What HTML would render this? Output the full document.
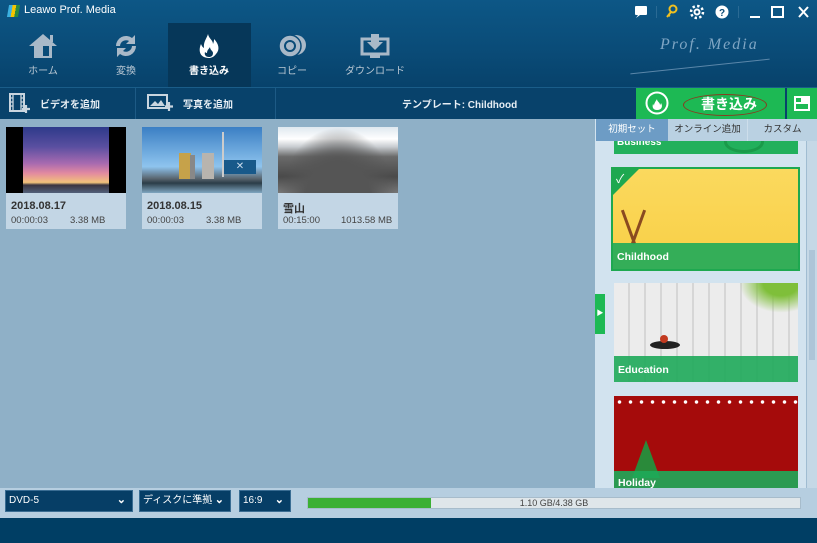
<!DOCTYPE html>
<html><head><meta charset="utf-8"><style>
*{margin:0;padding:0;box-sizing:border-box}
body{width:817px;height:543px;overflow:hidden;position:relative;font-family:"Liberation Sans","Noto Sans CJK JP",sans-serif;background:#8fb0c7}
.a{position:absolute}
.hdr{left:0;top:0;width:817px;height:87px;background:linear-gradient(#0d5786,#0a4b77 60%,#07426b)}
.nav{color:#b9c7d3;font-size:10px;text-align:center;width:82px;top:23px;height:64px}
.nav svg{display:block;margin:10px auto 3px}
.tb{left:0;top:87px;width:817px;height:32px;background:#08426b;border-top:1px solid #1a5d89}
.tbt{color:#e7eef4;font-size:10px;font-weight:bold;top:96px}
.card{width:120px;height:102px;top:127px;background:#c3d6e5}
.card .t{position:absolute;left:0;top:0;width:120px;height:66px;overflow:hidden}
.card b{position:absolute;left:5px;top:73px;font-size:11px;color:#333}
.card span{position:absolute;top:88px;font-size:9.5px;color:#444}
.tab{top:119px;height:22px;font-size:9.5px;color:#333;text-align:center;line-height:22px}
.tpl{width:184px;position:absolute;overflow:hidden}
.lab{position:absolute;left:0;bottom:0;width:100%;height:26px;background:rgba(30,170,90,.9);color:#fff;font-weight:bold;font-size:10.5px;padding:8px 0 0 4px}
.sel{top:490px;height:22px;background:#063e66;border:1px solid #3a6d93;color:#fff;font-size:10px;line-height:20px;padding-left:3px}
.sel i{position:absolute;right:6px;top:-1px;font-style:normal;font-size:11px;font-weight:bold}
</style></head><body>
<div class="a hdr"></div>
<div class="a" style="left:8px;top:5px;width:11px;height:12px;background:linear-gradient(90deg,#3bb0e0 33%,#f5c400 33% 66%,#2a8a3f 66%);transform:skewX(-10deg)"></div>
<div class="a" style="left:24px;top:4px;color:#fff;font-size:11px">Leawo Prof. Media</div>
<svg class="a" style="left:630px;top:4px" width="187" height="16" viewBox="0 0 187 16">
<rect x="5" y="2" width="12" height="9" rx="1" fill="#fff"/><path d="M8 11l-2 3 4-3z" fill="#fff"/>
<rect x="26" y="2" width="1" height="12" fill="#2a6a94"/>
<circle cx="43" cy="5" r="3.5" fill="none" stroke="#f0c020" stroke-width="2"/><path d="M41 8l-4 5M38 11l2 1" stroke="#f0c020" stroke-width="2"/>
<circle cx="67" cy="8" r="3.5" fill="#fff"/><circle cx="67" cy="8" r="6" fill="none" stroke="#fff" stroke-width="2.5" stroke-dasharray="2.4 2.3"/><circle cx="67" cy="8" r="1.5" fill="#0b4c78"/>
<circle cx="92" cy="8" r="6.5" fill="#fff"/><text x="92" y="12" font-size="10" font-weight="bold" text-anchor="middle" fill="#0b4c78" font-family="Liberation Sans">?</text>
<rect x="108" y="2" width="1" height="12" fill="#2a6a94"/>
<rect x="120" y="12" width="10" height="2" fill="#fff"/>
<rect x="142" y="3" width="11" height="10" fill="none" stroke="#fff" stroke-width="2"/>
<path d="M169 3l9 10M178 3l-9 10" stroke="#fff" stroke-width="2"/>
</svg>
<div class="a" style="left:168px;top:23px;width:83px;height:64px;background:#063759"></div>
<div class="a nav" style="left:2px"><svg width="30" height="26" viewBox="0 0 30 26"><path d="M15 1L1 13h5v12h18V13h5z" fill="#a9b9c8"/><rect x="22" y="2" width="3" height="7" fill="#a9b9c8"/><rect x="15" y="13" width="6" height="10" fill="#0a4b77"/></svg>ホーム</div>
<div class="a nav" style="left:85px"><svg width="28" height="26" viewBox="0 0 28 26"><path d="M4 13A10 10 0 0 1 20 5l3-3v9h-9l3-3A6 6 0 0 0 8 13z M24 13A10 10 0 0 1 8 21l-3 3v-9h9l-3 3a6 6 0 0 0 9-5z" fill="#a9b9c8"/></svg>変換</div>
<div class="a nav" style="left:168px;color:#fff;font-weight:bold"><svg width="28" height="26" viewBox="0 0 28 26"><path d="M14 25C5 25 3 18 6 11c1 3 3 4 3 4C8 9 12 5 13 1c1 5 5 6 5 10 1-2 1-4 1-5 5 5 6 11 2 15-2 3-5 4-7 4z" fill="#fff"/><path d="M14 24c-3 0-5-2-4-5 1 1 2 1 2 1 0-3 2-4 3-6 0 3 3 4 3 6 0 3-2 4-4 4z" fill="#063759"/></svg>書き込み</div>
<div class="a nav" style="left:251px"><svg width="30" height="26" viewBox="0 0 30 26"><circle cx="19" cy="12" r="10" fill="#a9b9c8"/><circle cx="13" cy="13" r="11" fill="#a9b9c8" stroke="#0a4b77" stroke-width="1.5"/><circle cx="13" cy="13" r="5" fill="none" stroke="#0a4b77" stroke-width="2"/></svg>コピー</div>
<div class="a nav" style="left:334px"><svg width="30" height="26" viewBox="0 0 30 26"><rect x="2" y="6" width="26" height="15" fill="none" stroke="#a9b9c8" stroke-width="3"/><path d="M11 1h8v8h4l-8 8-8-8h4z" fill="#a9b9c8"/><rect x="10" y="22" width="10" height="3" fill="#a9b9c8"/></svg>ダウンロード</div>
<div class="a" style="left:660px;top:36px;color:#7fa6c4;font-size:16px;font-style:italic;font-family:'Liberation Serif',serif;letter-spacing:2px">Prof. Media</div>
<div class="a" style="left:630px;top:66px;width:140px;height:1px;background:#5b87aa;transform:rotate(-6deg)"></div>
<div class="a tb"></div>
<div class="a" style="left:135px;top:88px;width:1px;height:31px;background:#1d5a85"></div>
<div class="a" style="left:275px;top:88px;width:1px;height:31px;background:#1d5a85"></div>
<svg class="a" style="left:9px;top:93px" width="22" height="20" viewBox="0 0 22 20"><rect x="1" y="1" width="14" height="17" fill="none" stroke="#c9d5df" stroke-width="2"/><path d="M4 1v17M12 1v17M1 5h3M1 9h3M1 13h3M12 5h3M12 9h3M12 13h3" stroke="#c9d5df" stroke-width="1.3"/><path d="M17 12v8M13 16h8" stroke="#c9d5df" stroke-width="2.2"/></svg>
<div class="a tbt" style="left:40px">ビデオを追加</div>
<svg class="a" style="left:147px;top:94px" width="26" height="18" viewBox="0 0 26 18"><rect x="1" y="1" width="19" height="13" fill="none" stroke="#c9d5df" stroke-width="2"/><path d="M3 12l5-5 3 3 3-4 4 6z" fill="#c9d5df"/><path d="M22 8v9M18 12.5h8" stroke="#c9d5df" stroke-width="2.2"/></svg>
<div class="a tbt" style="left:183px">写真を追加</div>
<div class="a tbt" style="left:402px">テンプレート: Childhood</div>
<div class="a" style="left:636px;top:88px;width:149px;height:31px;background:#1db954"></div>
<svg class="a" style="left:645px;top:91px" width="24" height="24" viewBox="0 0 24 24"><circle cx="12" cy="12" r="10.5" fill="none" stroke="#fff" stroke-width="2"/><path d="M12 19c-4 0-5-3-4-6 1 1 1 2 1 2 0-3 2-5 3-7 0 3 3 3 3 6 1-1 1-2 1-2 2 3 1 7-4 7z" fill="#fff"/></svg>
<div class="a" style="left:683px;top:94px;width:84px;height:22px;border:1px solid #8a3a20;border-radius:50%"></div>
<div class="a" style="left:701px;top:94px;color:#fff;font-size:14px;font-weight:bold">書き込み</div>
<div class="a" style="left:787px;top:88px;width:30px;height:31px;background:#1db954"></div>
<svg class="a" style="left:794px;top:96px" width="16" height="15" viewBox="0 0 16 15"><rect x="0" y="0" width="16" height="15" fill="#fff"/><rect x="2" y="2" width="5" height="4" fill="#1db954"/><rect x="2" y="8" width="12" height="5" fill="#1db954"/><rect x="9" y="2" width="5" height="4" fill="#fff"/></svg>
<!-- cards -->
<div class="a card" style="left:6px"><div class="t" style="background:linear-gradient(90deg,#000 14%,transparent 14% 86%,#000 86%),linear-gradient(#2e3a8a,#5a4fa0 30%,#a76ab0 55%,#e28aa0 70%,#f2c27a 84%,#3a3440 88%,#52607a)"></div><b>2018.08.17</b><span style="left:5px">00:00:03</span><span style="left:64px">3.38 MB</span></div>
<div class="a card" style="left:142px"><div class="t" style="background:linear-gradient(#3b7fc4,#8ec4ee 60%,#5a6670 78%,#2b3d48 85%,#7fa6c0)"><div class="a" style="left:37px;top:26px;width:12px;height:26px;background:#c6a24a"></div><div class="a" style="left:48px;top:28px;width:5px;height:24px;background:#888"></div><div class="a" style="left:60px;top:26px;width:12px;height:26px;background:#b8b4ae"></div><div class="a" style="left:80px;top:5px;width:2px;height:45px;background:#ccc"></div><div class="a" style="left:82px;top:33px;width:32px;height:14px;background:#18598a;color:#cde;font-size:10px;text-align:center;line-height:14px">✕</div></div><b>2018.08.15</b><span style="left:5px">00:00:03</span><span style="left:64px">3.38 MB</span></div>
<div class="a card" style="left:278px"><div class="t" style="background:radial-gradient(ellipse at 50% 120%,#555 40%,transparent 70%),linear-gradient(#dfe8ef,#fff 18%,#c8ccd0 30%,#6a6a6a 45%,#4a4a4a 75%,#777)"></div><b>雪山</b><span style="left:5px">00:15:00</span><span style="left:63px">1013.58 MB</span></div>
<!-- right panel -->
<div class="a" style="left:595px;top:119px;width:222px;height:370px;background:#d2e3ef"></div>
<div class="a tab" style="left:596px;width:72px;background:#6d9cc5;color:#fff">初期セット</div>
<div class="a tab" style="left:668px;width:80px;background:#bad1e2;border-right:1px solid #cddeeb">オンライン追加</div>
<div class="a tab" style="left:748px;width:69px;background:#bad1e2">カスタム</div>
<div class="a" style="left:806px;top:141px;width:11px;height:348px;background:#c5d8e6;border-left:1px solid #a0bcd1"></div>
<div class="a" style="left:809px;top:250px;width:6px;height:110px;background:#adc5d8"></div>
<div class="tpl" style="left:614px;top:141px;height:13px;background:#22b05c;color:#fff;font-weight:bold;font-size:10px;padding-left:3px;line-height:4px"><div class="a" style="left:110px;top:-10px;width:40px;height:22px;border:3px solid #1a9a4a;border-radius:50%"></div>Business</div>
<div class="tpl" style="left:611px;top:167px;width:189px;height:104px;border:2px solid #1ea850;background:linear-gradient(#fbd95e,#f8cf45)"><div class="a" style="left:14px;top:40px;width:3px;height:36px;background:#8a4a20;transform:rotate(-20deg)"></div><div class="a" style="left:24px;top:40px;width:3px;height:36px;background:#8a4a20;transform:rotate(20deg)"></div><div class="a" style="left:0;top:0;border-top:26px solid #1ea850;border-right:26px solid transparent"></div><div class="a" style="left:3px;top:1px;color:#fff;font-size:12px">✓</div><div class="lab">Childhood</div></div>
<div class="tpl" style="left:614px;top:283px;height:99px;background:repeating-linear-gradient(90deg,#ececec 0 14px,#d6d6d6 14px 16px)"><div class="a" style="left:125px;top:0;width:60px;height:30px;background:radial-gradient(ellipse at 70% 0,#7fbf3a 30%,transparent 70%)"></div><div class="a" style="left:36px;top:58px;width:30px;height:8px;background:#222;border-radius:50%"></div><div class="a" style="left:46px;top:52px;width:8px;height:8px;background:#c23a20;border-radius:50%"></div><div class="lab">Education</div></div>
<div class="tpl" style="left:614px;top:396px;height:93px;background:#a50b0b"><div class="a" style="left:0;top:3px;width:184px;height:6px;background:radial-gradient(circle,#fff 1.5px,transparent 2px) 0 0/11px 6px"></div><div class="a" style="left:18px;top:44px;border-bottom:38px solid #2a8a3a;border-left:14px solid transparent;border-right:14px solid transparent"></div><div class="lab" style="height:18px;padding-top:6px">Holiday</div></div>
<div class="a" style="left:595px;top:294px;width:10px;height:40px;background:#1db954;color:#fff;font-size:7px;line-height:40px;text-align:center">▶</div>
<!-- bottom -->
<div class="a" style="left:0;top:488px;width:817px;height:30px;background:#b6cee0"></div>
<div class="a sel" style="left:5px;width:128px">DVD-5<i>⌄</i></div>
<div class="a sel" style="left:139px;width:92px">ディスクに準拠<i>⌄</i></div>
<div class="a sel" style="left:239px;width:52px">16:9<i>⌄</i></div>
<div class="a" style="left:307px;top:497px;width:494px;height:12px;background:#dfe6ea;border:1px solid #a7bccb;font-size:9px;color:#444;text-align:center;line-height:11px">1.10 GB/4.38 GB</div>
<div class="a" style="left:308px;top:498px;width:123px;height:10px;background:#3cb034"></div>
<div class="a" style="left:0;top:518px;width:817px;height:25px;background:#003e64"></div>
</body></html>
